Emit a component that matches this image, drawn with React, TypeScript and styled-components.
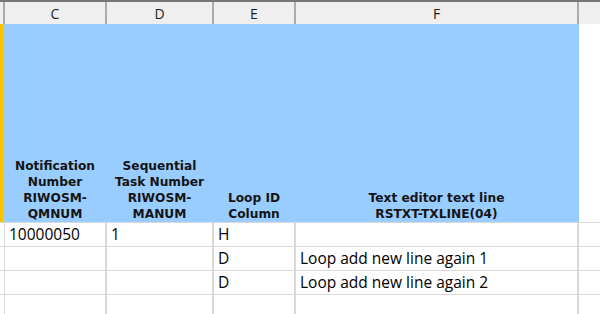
import React, { FC } from "react";
import styled, { createGlobalStyle, css } from "styled-components";

const GlobalStyle = createGlobalStyle`
  html, body {
    margin: 0;
    padding: 0;
    background: #ffffff;
    overflow: hidden;
  }
`;

// stub (row header edge), C, D, E, F, G
const columns = "3px 100px 105px 80px 281px 1fr";

const Sheet = styled.div`
  width: 600px;
  height: 314px;
  overflow: hidden;
  border-top: 2px solid #767676;
  box-sizing: border-box;
  background: #ffffff;
`;

const LetterRow = styled.div`
  display: grid;
  grid-template-columns: ${columns};
  column-gap: 2px;
  height: 20px;
  background: #ababab;
  border-bottom: 2px solid #a6a6a6;
`;

const Letter = styled.div`
  background: #efefef;
  font-family: "Open Sans", "Liberation Sans", sans-serif;
  font-size: 14px;
  line-height: 20px;
  padding-top: 2px;
  text-align: center;
  color: #1e1e1e;
  box-sizing: border-box;
`;

const Grid = styled.div`
  display: grid;
  grid-template-columns: ${columns};
  grid-template-rows: 198px;
  grid-auto-rows: 23px;
  gap: 1px 2px;
  background: #d9d9d9;
`;

const Cell = styled.div<{ $fill?: "blue" | "yellow" }>`
  background: #ffffff;
  font-family: "Open Sans", "Liberation Sans", sans-serif;
  font-size: 15.5px;
  line-height: 23px;
  padding-left: 4px;
  color: #000000;
  white-space: nowrap;
  ${({ $fill }) =>
    $fill === "blue" &&
    css`
      background: #99ccff;
      box-shadow: 2px 0 0 #99ccff, -2px 0 0 #99ccff;
    `}
  ${({ $fill }) =>
    $fill === "yellow" &&
    css`
      background: #f9c400;
      padding-left: 0;
    `}
`;

const HeadCell = styled(Cell)`
  display: flex;
  flex-direction: column;
  justify-content: flex-end;
  align-items: center;
  padding-left: 0;
  font-family: "DejaVu Sans", "Liberation Sans", sans-serif;
  font-weight: bold;
  font-size: 12.2px;
  line-height: 16px;
  color: #141414;
`;

const headers: string[][] = [
  ["Notification", "Number", "RIWOSM-", "QMNUM"],
  ["Sequential", "Task Number", "RIWOSM-", "MANUM"],
  ["Loop ID", "Column"],
  ["Text editor text line", "RSTXT-TXLINE(04)"],
];

const rows: string[][] = [
  ["10000050", "1", "H", ""],
  ["", "", "D", "Loop add new line again 1"],
  ["", "", "D", "Loop add new line again 2"],
  ["", "", "", ""],
];

const App: FC = () => {
  return (
    <>
      <GlobalStyle />
      <Sheet>
        <LetterRow>
          <Letter />
          {["C", "D", "E", "F", ""].map((l, i) => (
            <Letter key={i}>{l}</Letter>
          ))}
        </LetterRow>
        <Grid>
          <Cell $fill="yellow" />
          {headers.map((lines, i) => (
            <HeadCell key={i} $fill="blue">
              {lines.map((line) => (
                <span key={line}>{line}</span>
              ))}
            </HeadCell>
          ))}
          <Cell />
          {rows.map((row, r) => (
            <React.Fragment key={r}>
              <Cell />
              {row.map((value, c) => (
                <Cell key={c}>{value}</Cell>
              ))}
              <Cell />
            </React.Fragment>
          ))}
        </Grid>
      </Sheet>
    </>
  );
};

export default App;
